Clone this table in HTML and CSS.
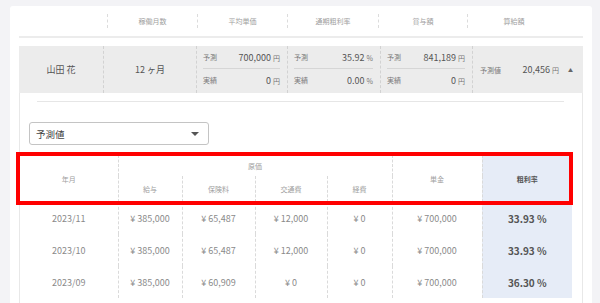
FILE: index.html
```html
<!DOCTYPE html>
<html>

<head>
    <title>稼働一覧</title>
    <link rel="stylesheet" href="styles.css">
</head>

<body>
    <div class="card">
        <div class="summary-head">
            <div class="head-cell head-blank"></div>
            <div class="head-cell">稼働月数</div>
            <div class="head-cell">平均単価</div>
            <div class="head-cell">通期粗利率</div>
            <div class="head-cell">賞与額</div>
            <div class="head-cell">算給額</div>
        </div>

        <div class="member">
            <div class="member-row">
                <div class="member-cell member-name">山田 花</div>
                <div class="member-cell">12 ヶ月</div>
                <div class="member-cell member-split">
                    <div class="split-line split-top">
                        <span class="split-label">予測</span>
                        <span class="split-value">700,000 <small>円</small></span>
                    </div>
                    <div class="split-line">
                        <span class="split-label">実績</span>
                        <span class="split-value">0 <small>円</small></span>
                    </div>
                </div>
                <div class="member-cell member-split">
                    <div class="split-line split-top">
                        <span class="split-label">予測</span>
                        <span class="split-value">35.92 <small>%</small></span>
                    </div>
                    <div class="split-line">
                        <span class="split-label">実績</span>
                        <span class="split-value">0.00 <small>%</small></span>
                    </div>
                </div>
                <div class="member-cell member-split">
                    <div class="split-line split-top">
                        <span class="split-label">予測</span>
                        <span class="split-value">841,189 <small>円</small></span>
                    </div>
                    <div class="split-line">
                        <span class="split-label">実績</span>
                        <span class="split-value">0 <small>円</small></span>
                    </div>
                </div>
                <div class="member-cell member-total">
                    <span class="split-label">予測値</span>
                    <span class="total-value">20,456 <small>円</small></span>
                    <span class="toggle">&#9650;</span>
                </div>
            </div>

            <div class="detail">
                <div class="detail-rule"></div>

                <div class="select-box">
                    <span>予測値</span>
                    <span class="select-caret"></span>
                </div>

                <div class="table-wrap">
                    <table class="cost-table">
                        <colgroup>
                            <col class="col-month">
                            <col class="col-salary">
                            <col class="col-insurance">
                            <col class="col-transport">
                            <col class="col-expense">
                            <col class="col-price">
                            <col class="col-rate">
                        </colgroup>
                        <thead>
                            <tr class="head-top">
                                <th rowspan="2">年月</th>
                                <th colspan="4" class="sep">原価</th>
                                <th rowspan="2" class="sep">単金</th>
                                <th rowspan="2" class="sep rate">粗利率</th>
                            </tr>
                            <tr class="head-sub">
                                <th class="sep">給与</th>
                                <th class="sep">保険料</th>
                                <th class="sep">交通費</th>
                                <th class="sep">経費</th>
                            </tr>
                        </thead>
                        <tbody>
                            <tr>
                                <td>2023/11</td>
                                <td class="sep">¥ 385,000</td>
                                <td class="sep">¥ 65,487</td>
                                <td class="sep">¥ 12,000</td>
                                <td class="sep">¥ 0</td>
                                <td class="sep">¥ 700,000</td>
                                <td class="sep rate">33.93 %</td>
                            </tr>
                            <tr>
                                <td>2023/10</td>
                                <td class="sep">¥ 385,000</td>
                                <td class="sep">¥ 65,487</td>
                                <td class="sep">¥ 12,000</td>
                                <td class="sep">¥ 0</td>
                                <td class="sep">¥ 700,000</td>
                                <td class="sep rate">33.93 %</td>
                            </tr>
                            <tr>
                                <td>2023/09</td>
                                <td class="sep">¥ 385,000</td>
                                <td class="sep">¥ 60,909</td>
                                <td class="sep">¥ 0</td>
                                <td class="sep">¥ 0</td>
                                <td class="sep">¥ 700,000</td>
                                <td class="sep rate">36.30 %</td>
                            </tr>
                        </tbody>
                    </table>
                    <div class="highlight"></div>
                </div>
            </div>
        </div>
    </div>
</body>

</html>
```

FILE: styles.css
```css
html,
body {
    height: 100%;
}

body {
    margin: 0;
    background-color: #f3f3f6;
    font-family: "Noto Sans CJK JP", "Noto Sans", sans-serif;
    color: #555;
    overflow: hidden;
}

.card {
    margin: 6px 0 0 10px;
    width: 564px;
    min-height: 400px;
    padding: 0 9px;
    background-color: #fff;
    border-radius: 3px;
}

/* summary header */
.summary-head {
    display: grid;
    grid-template-columns: 88px 90px 90px 91px 89px 93px;
    align-items: center;
    height: 30px;
    border-bottom: 2px solid #ececec;
}

.head-cell {
    height: 14px;
    line-height: 14px;
    font-size: 7px;
    color: #a0a0a0;
    text-align: center;
    border-left: 1px dashed #dcdcdc;
}

.head-blank {
    border-left: none;
}

/* member row */
.member {
    margin-top: 8px;
}

.member-row {
    display: grid;
    grid-template-columns: 84px 93px 91px 93px 92px 1fr;
    height: 47px;
    background-color: #ececec;
}

.member-cell {
    display: flex;
    align-items: center;
    justify-content: center;
    font-size: 9px;
    color: #555;
    border-left: 1px dashed #d2d2d2;
}

.member-name {
    border-left: none;
}

.member-split {
    display: block;
    padding: 0 7px 0 6px;
}

.split-line {
    display: flex;
    align-items: center;
    justify-content: space-between;
    height: 22px;
}

.split-top {
    border-bottom: 1px solid #d6d6d6;
}

.split-label {
    font-size: 7px;
    color: #777;
}

.split-value small,
.total-value small {
    font-size: 7px;
    color: #777;
}

.member-total {
    justify-content: flex-start;
    padding: 0 10px 0 7px;
}

.total-value {
    margin-left: auto;
}

.toggle {
    margin-left: 9px;
    font-size: 5px;
    color: #666;
}

/* expanded detail */
.detail {
    border-left: 1px solid #e8e8e8;
    border-right: 1px solid #e8e8e8;
    padding-top: 8px;
    min-height: 300px;
}

.detail-rule {
    height: 1px;
    margin: 0 18px 0 17px;
    background-color: #e6e6e6;
}

.select-box {
    display: flex;
    align-items: center;
    justify-content: space-between;
    width: 166px;
    height: 21px;
    margin: 20px 0 0 9px;
    padding: 0 6px;
    border: 1px solid #c4c4c4;
    border-radius: 3px;
    font-size: 9.5px;
    color: #444;
}

.select-caret {
    width: 0;
    height: 0;
    margin-right: 3px;
    border-left: 4px solid transparent;
    border-right: 4px solid transparent;
    border-top: 4px solid #555;
}

.table-wrap {
    position: relative;
    width: 552px;
    margin-top: 10px;
}

.cost-table {
    width: 552px;
    border-collapse: collapse;
    table-layout: fixed;
}

.col-month {
    width: 98px;
}

.col-salary {
    width: 64px;
}

.col-insurance {
    width: 73px;
}

.col-transport {
    width: 72px;
}

.col-expense {
    width: 65px;
}

.col-price {
    width: 90px;
}

.col-rate {
    width: 90px;
}

.cost-table th,
.cost-table td {
    padding: 0;
    text-align: center;
    font-weight: normal;
}

.cost-table th {
    font-size: 7px;
    color: #a0a0a0;
}

.head-top th {
    height: 21px;
}

.head-sub th {
    height: 26px;
}

.cost-table td {
    height: 32px;
    font-size: 9px;
    color: #8a8a8a;
}

.cost-table .sep {
    border-left: 1px dashed #dadada;
}

.cost-table .rate {
    background-color: #e6ecf7;
}

.cost-table th.rate {
    font-weight: bold;
    color: #555;
}

.cost-table td.rate {
    font-size: 10px;
    font-weight: bold;
    color: #555;
}

/* red annotation box over the header */
.highlight {
    position: absolute;
    left: -4px;
    top: -3px;
    width: 549px;
    height: 45px;
    border: 4px solid #f00;
}
```
